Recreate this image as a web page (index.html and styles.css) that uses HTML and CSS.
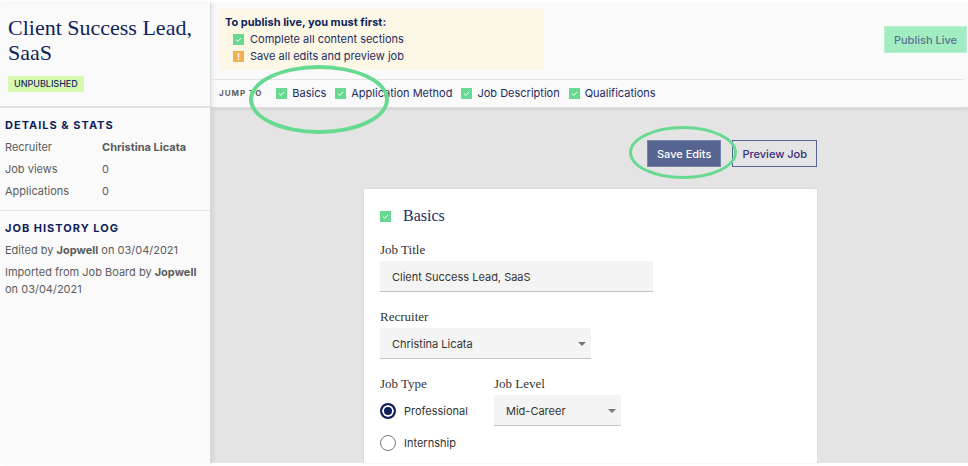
FILE: index.html
```html
<!DOCTYPE html>
<html lang="en">
<head>
    <meta charset="UTF-8">
    <meta name="viewport" content="width=device-width, initial-scale=1.0">
    <title>Client Success Lead, SaaS</title>
    <link rel="stylesheet" href="styles.css">
</head>
<body>
    <svg class="sprite" aria-hidden="true">
        <symbol id="check" viewBox="0 0 11 11">
            <rect width="11" height="11" fill="#68d991"/>
            <path d="M3 5.6 4.8 7.3 8.1 3.9" fill="none" stroke="#fff" stroke-width="1"/>
        </symbol>
        <symbol id="warn" viewBox="0 0 11 11">
            <rect width="11" height="11" fill="#f0b155"/>
            <path d="M5.5 2.2v4.2M5.5 7.6v1.4" fill="none" stroke="#fff" stroke-width="1.4"/>
        </symbol>
        <symbol id="arrow" viewBox="0 0 8 4">
            <path d="M0 0h8L4 4z" fill="#777"/>
        </symbol>
    </svg>

    <div class="page">
        <aside class="sidebar">
            <div class="job-header">
                <h1>Client Success Lead, SaaS</h1>
                <span class="status">UNPUBLISHED</span>
            </div>

            <section class="panel">
                <h2>DETAILS &amp; STATS</h2>
                <dl class="stats">
                    <dt>Recruiter</dt>
                    <dd><strong>Christina Licata</strong></dd>
                    <dt>Job views</dt>
                    <dd>0</dd>
                    <dt>Applications</dt>
                    <dd>0</dd>
                </dl>
            </section>

            <section class="panel">
                <h2>JOB HISTORY LOG</h2>
                <p>Edited by <strong>Jopwell</strong> on 03/04/2021</p>
                <p>Imported from Job Board by <strong>Jopwell</strong> on 03/04/2021</p>
            </section>
        </aside>

        <div class="main">
            <header class="topbar">
                <div class="publish">
                    <div class="notice">
                        <strong>To publish live, you must first:</strong>
                        <ul>
                            <li><svg class="icon"><use href="#check"/></svg>Complete all content sections</li>
                            <li><svg class="icon"><use href="#warn"/></svg>Save all edits and preview job</li>
                        </ul>
                    </div>
                    <button type="button" class="btn btn-publish">Publish Live</button>
                </div>
                <nav class="jump">
                    <span class="jump-label">JUMP TO</span>
                    <a href="#basics"><svg class="icon"><use href="#check"/></svg>Basics</a>
                    <a href="#method"><svg class="icon"><use href="#check"/></svg>Application Method</a>
                    <a href="#description"><svg class="icon"><use href="#check"/></svg>Job Description</a>
                    <a href="#qualifications"><svg class="icon"><use href="#check"/></svg>Qualifications</a>
                    <span class="ring ring-jump"></span>
                </nav>
            </header>

            <main class="content">
                <div class="actions">
                    <button type="button" class="btn btn-save">Save Edits</button>
                    <button type="button" class="btn btn-preview">Preview Job</button>
                    <span class="ring ring-save"></span>
                </div>

                <form class="card" id="basics">
                    <h3><svg class="icon"><use href="#check"/></svg>Basics</h3>

                    <div class="field">
                        <label class="label" for="title">Job Title</label>
                        <input class="control title-input" id="title" type="text" value="Client Success Lead, SaaS">
                    </div>

                    <div class="field">
                        <label class="label" for="recruiter">Recruiter</label>
                        <div class="select recruiter-select">
                            <select class="control" id="recruiter">
                                <option>Christina Licata</option>
                            </select>
                            <svg class="arrow"><use href="#arrow"/></svg>
                        </div>
                    </div>

                    <div class="row">
                        <fieldset>
                            <legend class="label">Job Type</legend>
                            <label class="radio"><input type="radio" name="type" checked>Professional</label>
                            <label class="radio"><input type="radio" name="type">Internship</label>
                        </fieldset>
                        <div>
                            <label class="label" for="level">Job Level</label>
                            <div class="select level-select">
                                <select class="control" id="level">
                                    <option>Mid-Career</option>
                                </select>
                                <svg class="arrow"><use href="#arrow"/></svg>
                            </div>
                        </div>
                    </div>
                </form>
            </main>
        </div>
    </div>
</body>
</html>
```
FILE: styles.css
```css
* {
    box-sizing: border-box;
}
body {
    margin: 0;
    background: #fff;
    color: #1c2b63;
    font-family: Inter, "Liberation Sans", sans-serif;
    font-size: 11px;
    line-height: 17px;
}
h1, h2, h3, p, ul, dl, dd, fieldset, legend {
    margin: 0;
    padding: 0;
}
.sprite {
    display: none;
}
.page {
    display: flex;
    height: 100vh;
    padding: 3px 0;
}
.icon {
    flex: none;
    width: 11px;
    height: 11px;
}

/* sidebar */
.sidebar {
    position: relative;
    flex: none;
    width: 211px;
    background: #fafafa;
    border-right: 1px solid #dcdcdc;
    box-shadow: 2px 0 4px rgba(0, 0, 0, 0.08);
    color: #5c5c5c;
}
.job-header {
    height: 105px;
    padding: 12px 8px 0;
    border-bottom: 2px solid #e0e0e0;
}
h1 {
    color: #0f1f5c;
    font-family: "Liberation Serif", serif;
    font-size: 22px;
    font-weight: normal;
    line-height: 25px;
}
.status {
    display: inline-block;
    margin-top: 11px;
    padding: 0 6px;
    background: #d7f9b0;
    color: #1c2b63;
    font-size: 9px;
    font-weight: 500;
    line-height: 16px;
}
.panel {
    padding: 9px 5px 10px;
}
.panel + .panel {
    border-top: 1px solid #e6e6e6;
}
h2 {
    margin-bottom: 5px;
    color: #0f1f5c;
    font-size: 11px;
    line-height: 17px;
    letter-spacing: 1px;
}
.stats {
    display: grid;
    grid-template-columns: 97px 1fr;
    row-gap: 5px;
}
.panel p {
    margin-bottom: 5px;
}

/* top bar */
.main {
    display: flex;
    flex: 1;
    flex-direction: column;
    min-width: 0;
    background: #e4e4e4;
}
.topbar {
    padding-left: 8px;
    background: #fafafa;
    border-bottom: 1px solid #dcdcdc;
    box-shadow: 0 1px 3px rgba(0, 0, 0, 0.1);
}
.publish {
    display: flex;
    align-items: flex-start;
    justify-content: space-between;
    padding: 6px 1px 9px 0;
}
.notice {
    width: 325px;
    padding: 5px 6px;
    background: #fdf8e6;
}
.notice strong {
    display: block;
    color: #0f1f5c;
}
.notice ul {
    padding-left: 8px;
    list-style: none;
}
.notice li {
    display: flex;
    align-items: center;
    gap: 6px;
}
.btn {
    height: 27px;
    padding: 0 9px;
    border: 1px solid transparent;
    font-family: inherit;
    font-size: 11px;
    font-weight: 500;
}
.btn-publish {
    margin-top: 17px;
    background: #a2ecc1;
    border-color: #b9f1d0;
    color: #5a7392;
}
.jump {
    position: relative;
    display: flex;
    align-items: center;
    gap: 9px;
    height: 28px;
    margin: 0 4px 0 -8px;
    padding-left: 8px;
    border-top: 1px solid #e4e4e4;
}
.jump-label {
    margin-right: 5px;
    color: #5c5c5c;
    font-size: 8px;
    font-weight: bold;
    letter-spacing: 1px;
}
.jump a {
    display: flex;
    align-items: center;
    gap: 5px;
    color: #1c2b63;
    text-decoration: none;
}
.ring {
    position: absolute;
    border: 4px solid #68d991;
    border-radius: 50%;
    pointer-events: none;
}
.ring-jump {
    top: -15px;
    left: 38px;
    width: 140px;
    height: 69px;
    z-index: 1;
}

/* content */
.content {
    display: flex;
    flex: 1;
    flex-direction: column;
    width: 100%;
    max-width: 455px;
    min-height: 0;
    margin: 0 auto;
    padding: 32px 0 0 2px;
}
.actions {
    position: relative;
    display: flex;
    justify-content: flex-end;
    gap: 11px;
    margin-bottom: 22px;
}
.btn-save {
    background: #566491;
    border-color: #7783aa;
    color: #fff;
}
.btn-preview {
    background: transparent;
    border-color: #566491;
    color: #352c7c;
}
.ring-save {
    top: -14px;
    right: 80px;
    width: 108px;
    height: 53px;
    border-width: 3px;
}
.card {
    flex: 1;
    min-height: 0;
    padding: 16px 16px 12px;
    overflow: hidden;
    background: #fff;
    box-shadow: 0 0 2px rgba(0, 0, 0, 0.1);
    color: #333;
}
h3 {
    display: flex;
    align-items: center;
    gap: 12px;
    margin-bottom: 15px;
    color: #1c2b63;
    font-family: "Liberation Serif", serif;
    font-size: 16px;
    font-weight: normal;
    line-height: 22px;
}
.field {
    margin-bottom: 17px;
}
.label {
    display: block;
    margin-bottom: 3px;
    font-family: "Liberation Serif", serif;
    font-size: 13px;
    line-height: 16px;
}
.control {
    display: block;
    width: 100%;
    height: 31px;
    padding: 2px 12px 0;
    appearance: none;
    background: #f4f4f4;
    border: 0;
    border-bottom: 1px solid #c4c4c4;
    border-radius: 0;
    color: #333;
    font-family: inherit;
    font-size: 11px;
}
.title-input {
    max-width: 273px;
}
.select {
    position: relative;
}
.recruiter-select {
    max-width: 211px;
}
.level-select {
    width: 127px;
}
.arrow {
    position: absolute;
    top: 14px;
    right: 5px;
    width: 8px;
    height: 4px;
    pointer-events: none;
}
.row {
    display: grid;
    grid-template-columns: 114px 1fr;
}
fieldset {
    border: 0;
}
.radio {
    display: flex;
    align-items: center;
    gap: 8px;
    height: 32px;
}
.radio input {
    flex: none;
    width: 16px;
    height: 16px;
    margin: 0;
    appearance: none;
    background: #fff;
    border: 1px solid #777;
    border-radius: 50%;
}
.radio input:checked {
    background: #0f1f5c;
    border: 2px solid #0f1f5c;
    box-shadow: inset 0 0 0 2px #fff;
}
```
